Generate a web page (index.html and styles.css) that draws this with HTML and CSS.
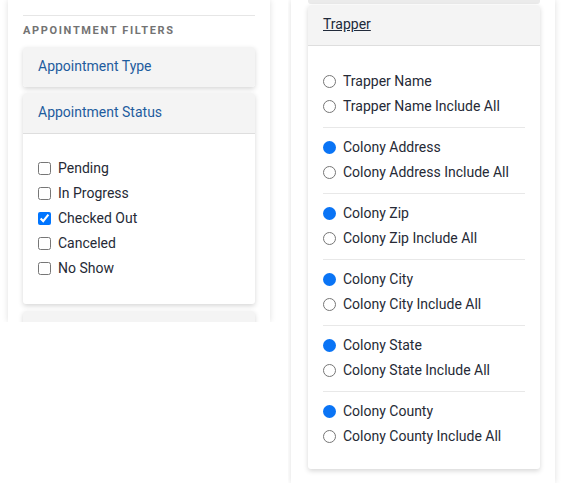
FILE: index.html
```html
<!DOCTYPE html>
<html lang="en">
<head>
<meta charset="utf-8">
<title>Filters</title>
<link rel="stylesheet" href="styles.css">
</head>
<body>
<div class="shot">
  <div class="pane pane-left">
    <aside class="sidebar sidebar-left">
      <hr class="rule">
      <h6 class="filters-title">APPOINTMENT FILTERS</h6>
      <div class="card">
        <div class="card-header card-header-closed">Appointment Type</div>
      </div>
      <div class="card">
        <div class="card-header">Appointment Status</div>
        <div class="card-body">
          <label class="opt"><input type="checkbox"><span>Pending</span></label>
          <label class="opt"><input type="checkbox"><span>In Progress</span></label>
          <label class="opt"><input type="checkbox" checked><span>Checked Out</span></label>
          <label class="opt"><input type="checkbox"><span>Canceled</span></label>
          <label class="opt"><input type="checkbox"><span>No Show</span></label>
        </div>
      </div>
      <div class="card card-cut">
        <div class="card-header card-header-closed">&nbsp;</div>
      </div>
    </aside>
  </div>
  <div class="pane pane-right">
    <aside class="sidebar sidebar-right">
      <div class="card-stub"></div>
      <div class="card">
        <div class="card-header"><a class="header-link" href="#">Trapper</a></div>
        <div class="card-body card-body-radios">
          <div class="group">
            <label class="opt"><input type="radio" name="g1"><span>Trapper Name</span></label>
            <label class="opt"><input type="radio" name="g1"><span>Trapper Name Include All</span></label>
          </div>
          <div class="group">
            <label class="opt"><input type="radio" name="g2" checked><span>Colony Address</span></label>
            <label class="opt"><input type="radio" name="g2"><span>Colony Address Include All</span></label>
          </div>
          <div class="group">
            <label class="opt"><input type="radio" name="g3" checked><span>Colony Zip</span></label>
            <label class="opt"><input type="radio" name="g3"><span>Colony Zip Include All</span></label>
          </div>
          <div class="group">
            <label class="opt"><input type="radio" name="g4" checked><span>Colony City</span></label>
            <label class="opt"><input type="radio" name="g4"><span>Colony City Include All</span></label>
          </div>
          <div class="group">
            <label class="opt"><input type="radio" name="g5" checked><span>Colony State</span></label>
            <label class="opt"><input type="radio" name="g5"><span>Colony State Include All</span></label>
          </div>
          <div class="group">
            <label class="opt"><input type="radio" name="g6" checked><span>Colony County</span></label>
            <label class="opt"><input type="radio" name="g6"><span>Colony County Include All</span></label>
          </div>
        </div>
      </div>
    </aside>
  </div>
</div>
</body>
</html>
```
FILE: styles.css
```css
* { box-sizing: border-box; }

html, body {
  margin: 0;
  padding: 0;
  background: #ffffff;
}

body {
  font-family: Roboto, "Liberation Sans", Arial, sans-serif;
  font-size: 14px;
  color: #212529;
}

.shot {
  display: flex;
  align-items: flex-start;
  width: 566px;
  height: 483px;
  overflow: hidden;
}

.pane {
  overflow: hidden;
  background: #ffffff;
}

.pane-left {
  width: 288px;
  height: 322px;
  padding-left: 8px;
}

.pane-right {
  width: 278px;
  height: 483px;
  padding-left: 3px;
}

.sidebar {
  height: 100%;
  background: #ffffff;
  box-shadow: 0 0 6px rgba(0, 0, 0, 0.13);
}

.sidebar-left {
  width: 262px;
  padding: 15px 15px 0;
}

.sidebar-right {
  width: 264px;
  padding: 0 15px 0 17px;
}

.rule {
  margin: 0;
  border: 0;
  border-top: 1px solid #e6e6e6;
}

.filters-title {
  margin: 8px 0 9px;
  font-size: 11px;
  line-height: 14px;
  font-weight: 700;
  letter-spacing: 1.65px;
  color: #737373;
}

.card {
  background: #ffffff;
  border-radius: 3px;
  box-shadow: 0 2px 5px rgba(0, 0, 0, 0.16);
  margin-bottom: 6px;
}

.card-cut {
  margin-top: 7px;
}

.card-header {
  background: #f4f4f4;
  padding: 10px 15px 12px;
  line-height: 18px;
  border-bottom: 1px solid #dedede;
  color: #1e5c9e;
  border-radius: 3px 3px 0 0;
}

.card-header-closed {
  border-bottom: 0;
  border-radius: 3px;
}

.header-link {
  color: #212a3a;
  text-decoration: underline;
}

.card-body {
  padding: 22px 15px 23px;
  display: flex;
  flex-direction: column;
}

.opt {
  display: flex;
  align-items: center;
  height: 25px;
  line-height: 25px;
  color: #262a36;
}

.opt input {
  margin: 0 7px 0 0;
  width: 13px;
  height: 13px;
  flex: none;
}

.card-stub {
  height: 4px;
  background: #ebebeb;
  margin: 0 0 1px;
  border-radius: 0 0 3px 3px;
}

.card-body-radios {
  padding: 23px 15px 20px;
}

.group {
  display: flex;
  flex-direction: column;
  padding: 7px 0 8px;
  border-top: 1px solid #e8e8e8;
}

.group:first-child {
  border-top: 0;
  padding-top: 0;
}

.group:last-child {
  padding-bottom: 0;
}

.opt input[type="radio"]:checked {
  appearance: none;
  -webkit-appearance: none;
  border-radius: 50%;
  background: #0a74f5;
  border: 0;
}
```
